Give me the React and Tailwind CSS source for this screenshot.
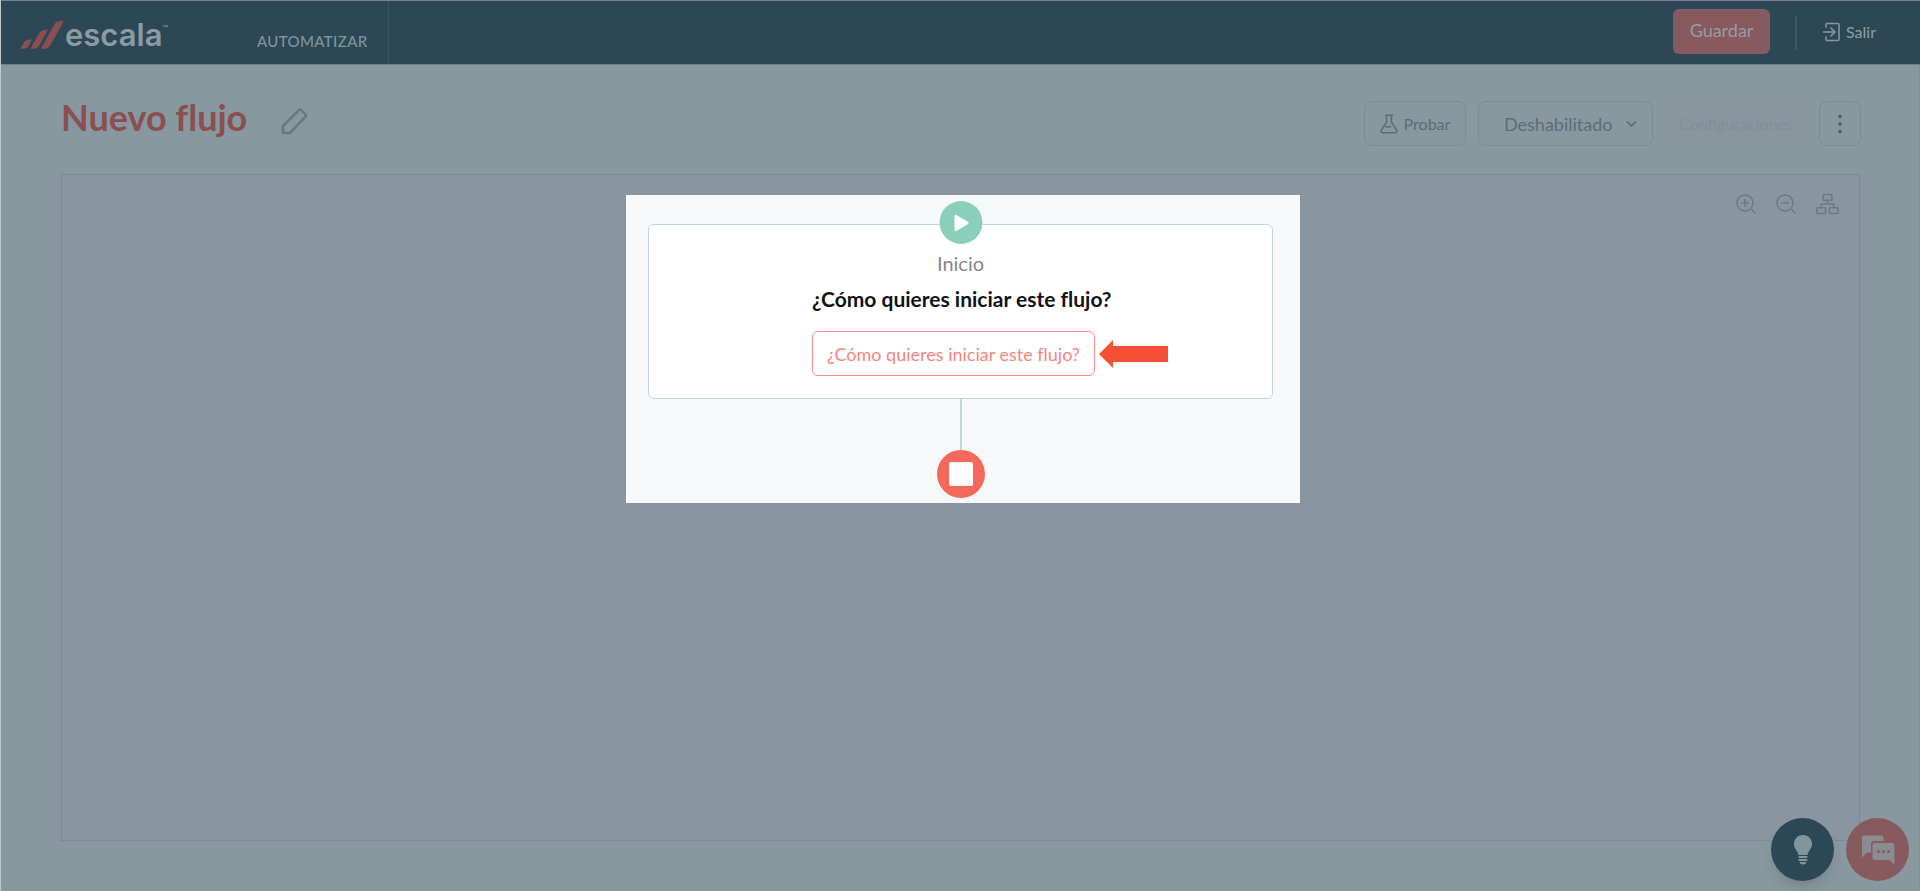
import { FaPlay } from "react-icons/fa";

function Logo() {
  return (
    <a href="#" className="flex items-center gap-px" aria-label="escala">
      <svg width="44" height="30" viewBox="0 0 44 30" fill="#8a4f50">
        <path d="M0.500 28.800 L4 22.500 Q6 19.300 12 19.600 L8.500 26 Q7 28.800 4 28.800 Z" />
        <path d="M10.500 28.800 L19 13.500 Q21.500 9.300 28 9.800 L19 25.800 Q17 28.800 14 28.800 Z" />
        <path d="M21 28.800 L34 5 Q37 0 43.800 1 L30 25.800 Q28 28.800 25 28.800 Z" />
      </svg>
      <span className="flex items-start font-[Inter,sans-serif] text-[#8a9ba2]">
        <span className="text-[31px] leading-8 font-semibold">escala</span>
        <span className="text-[9px] leading-5">™</span>
      </span>
    </a>
  );
}

function PencilIcon() {
  return (
    <svg width="28" height="28" viewBox="0 0 28 28" fill="none" stroke="#677981" strokeWidth="2.600" strokeLinejoin="round">
      <path d="M2 26 V19 L17.500 3.500 Q19 2 20.500 3.300 L24.500 7.300 Q25.500 8.500 24.500 9.600 L9 26 Z" />
    </svg>
  );
}

function ExitIcon() {
  return (
    <svg width="17" height="20" viewBox="0 0 17 20" fill="none" stroke="#8496a0" strokeWidth="1.600">
      <path d="M3 5.500 V2.500 Q3 1.500 4 1.500 H15 Q16 1.500 16 2.500 V17.500 Q16 18.500 15 18.500 H4 Q3 18.500 3 17.500 V14.500" />
      <path d="M0 10 H11.500 M7.500 5.500 L12 10 L7.500 14.500" />
    </svg>
  );
}

function FlaskIcon() {
  return (
    <svg width="18" height="20" viewBox="0 0 18 20" fill="none" stroke="#5a6d76" strokeWidth="1.500" strokeLinejoin="round">
      <path d="M5 1.200 H13 M6.500 1.200 V8 L1.300 16.300 Q0.500 18.800 3 18.800 H15 Q17.500 18.800 16.700 16.300 L11.500 8 V1.200" />
      <path d="M5 12.800 H11" />
    </svg>
  );
}

function ZoomIcon({ plus }) {
  return (
    <svg width="20" height="20" viewBox="0 0 20 20" fill="none" stroke="#687c85" strokeWidth="1.500">
      <circle cx="9" cy="9" r="8" />
      <path d="M15.500 15.500 L19.300 19.300 M5 9 H13" />
      {plus && <path d="M9 5 V13" />}
    </svg>
  );
}

function TreeIcon() {
  return (
    <svg width="23" height="22" viewBox="0 0 24 22" fill="none" stroke="#687c85" strokeWidth="1.600">
      <rect x="7.500" y="1" width="9" height="6" rx="0.500" />
      <rect x="1" y="15" width="9" height="6" rx="0.500" />
      <rect x="14" y="15" width="9" height="6" rx="0.500" />
      <path d="M12 7 V11 M5.500 15 V11 H18.500 V15" />
    </svg>
  );
}

function BulbIcon() {
  return (
    <svg width="20" height="32" viewBox="0 0 20 32" fill="#82959d">
      <path d="M10 1 C4.500 1 1 5 1 10 C1 15 5 17 5.500 21 H14.500 C15 17 19 15 19 10 C19 5 15.500 1 10 1 Z" />
      <rect x="5.500" y="22" width="9" height="2" rx="1" />
      <rect x="5.500" y="25" width="9" height="2" rx="1" />
      <path d="M6.500 28 H13.500 Q13 30.500 10 30.500 Q7 30.500 6.500 28 Z" />
    </svg>
  );
}

function ChatIcon() {
  return (
    <svg width="34" height="30" viewBox="0 0 34 30">
      <path fill="#8d8b92" d="M3 0.500 H20 Q22.500 0.500 22.500 3 V6 H13 Q10 6 10 9 V17.500 H6 L1 22.500 V3 Q1 0.500 3 0.500 Z" />
      <path fill="#8d8b92" d="M14 8 H31 Q33.500 8 33.500 10.500 V30 L28.500 25 H14 Q11.500 25 11.500 22.500 V10.500 Q11.500 8 14 8 Z" />
      <g fill="#865a5e">
        <circle cx="17.500" cy="16.500" r="1.500" />
        <circle cx="22.500" cy="16.500" r="1.500" />
        <circle cx="27.500" cy="16.500" r="1.500" />
      </g>
    </svg>
  );
}

function Header() {
  return (
    <header className="flex h-[65px] items-stretch justify-between border-t border-b border-t-[#7f7c9b] border-b-[#6c808a] bg-[#2c4857] pr-11">
      <div className="flex">
        <div className="flex items-center pt-1 pl-[19px]">
          <Logo />
        </div>
        <nav className="ml-[89px] flex items-center border-r border-[#3a5664] pt-[18px] pr-5">
          <a href="#" className="text-[15px] font-medium tracking-wide text-[#82939d]">AUTOMATIZAR</a>
        </nav>
      </div>
      <div className="flex items-start pt-2">
        <button type="button" className="h-[45px] w-[97px] rounded-md bg-[#865a5e] pb-1 text-lg text-[#9a9ba3]">Guardar</button>
        <span className="mt-[7px] ml-[25px] h-[34px] w-0.5 bg-[#3d5765]" />
        <a href="#" className="mt-[11px] ml-[26px] flex items-center gap-1.5 text-base text-[#8c9da6]">
          <ExitIcon />
          Salir
        </a>
      </div>
    </header>
  );
}

function Toolbar() {
  return (
    <div className="flex items-start justify-between pr-[58px] pl-[60px]">
      <div className="flex items-center gap-[34px] pt-[30px]">
        <h1 className="text-4xl leading-[44px] font-bold text-[#8a4f50]">Nuevo flujo</h1>
        <button type="button" aria-label="Editar nombre" className="pt-2">
          <PencilIcon />
        </button>
      </div>
      <div className="flex gap-3 pt-9">
        <button type="button" className="flex h-[45px] w-[102px] items-center justify-center gap-1.5 rounded-lg border border-[#7a8d96] text-base text-[#5c6e77]">
          <FlaskIcon />
          Probar
        </button>
        <div className="relative">
          <select aria-label="Estado del flujo" className="h-[45px] w-[175px] appearance-none rounded-lg border border-[#7a8d96] bg-transparent pl-[25px] text-lg text-[#5c6e77]">
            <option>Deshabilitado</option>
            <option>Habilitado</option>
          </select>
          <svg className="pointer-events-none absolute top-[19px] right-4" width="11" height="8" viewBox="0 0 11 8" fill="none" stroke="#566972" strokeWidth="1.500">
            <path d="M1 1.500 L5.500 6 L10 1.500" />
          </svg>
        </div>
        <button type="button" disabled className="h-[45px] w-[142px] rounded-lg bg-[#89969e] text-base text-[#7e919a]">Configuraciones</button>
        <button type="button" aria-label="Más opciones" className="flex h-[45px] w-[42px] items-center justify-center rounded-lg border border-[#7a8d96]">
          <svg width="4" height="20" viewBox="0 0 4 20" fill="#4b5d67">
            <circle cx="2" cy="2.500" r="1.800" />
            <circle cx="2" cy="10" r="1.800" />
            <circle cx="2" cy="17.500" r="1.800" />
          </svg>
        </button>
      </div>
    </div>
  );
}

function StartCard() {
  return (
    <section className="relative flex w-[625px] flex-col items-center rounded-md border border-[#c0d4de] bg-white pt-[26px] pb-[22px]">
      <span className="absolute -top-6 left-1/2 flex size-[43px] -translate-x-1/2 items-center justify-center rounded-full bg-[#8acfb9]">
        <FaPlay className="ml-0.5 size-4 text-white" />
      </span>
      <p className="text-xl leading-6 text-[#85868a]">Inicio</p>
      <div className="mt-2.5 flex w-[297px] flex-col items-start">
        <h2 className="text-[21px] leading-7 font-bold whitespace-nowrap text-[#111315]">¿Cómo quieres iniciar este flujo?</h2>
        <div className="relative mt-[18px]">
          <button type="button" className="h-[45px] rounded-md border border-[#f58d84] px-3.5 text-lg text-[#f5857c]">
            ¿Cómo quieres iniciar este flujo?
          </button>
          <svg className="absolute top-2 left-full ml-1" width="69" height="30" viewBox="0 0 69 30" fill="#f55036">
            <path d="M0 15 L14 1 V7 H69 V23 H14 V29 Z" />
          </svg>
        </div>
      </div>
    </section>
  );
}

function Canvas() {
  return (
    <div className="mt-7 mr-[44px] mb-[50px] ml-[45px] flex flex-1 bg-[#89969f] px-[15px]">
      <div className="relative flex flex-1 items-start justify-center border border-[#7a8d96] pt-5 pl-[5px]">
        <div className="flex flex-col items-center bg-[#f6f8fa] pt-[29px] pr-[27px] pb-[5px] pl-[22px]">
          <StartCard />
          <span className="h-[51px] w-0.5 bg-[#c5d5df]" />
          <span className="flex size-12 items-center justify-center rounded-full bg-[#f5695c]">
            <span className="size-6 rounded-xs bg-white" />
          </span>
        </div>
        <div className="absolute top-[18px] right-5 flex items-center gap-5">
          <button type="button" aria-label="Acercar"><ZoomIcon plus /></button>
          <button type="button" aria-label="Alejar"><ZoomIcon /></button>
          <button type="button" aria-label="Ordenar"><TreeIcon /></button>
        </div>
      </div>
    </div>
  );
}

export default function App() {
  return (
    <div className="relative flex min-h-screen flex-col border-l border-[#bfcacd] bg-[#88989f] font-[Lato,sans-serif] [font-variant-ligatures:none]">
      <Header />
      <main className="flex flex-1 flex-col border-r border-[#7f9097]">
        <Toolbar />
        <Canvas />
      </main>
      <div className="fixed right-[11px] bottom-[10px] flex gap-3">
        <button type="button" aria-label="Ideas" className="flex size-[63px] items-center justify-center rounded-full bg-[#2c4857] shadow-lg">
          <BulbIcon />
        </button>
        <button type="button" aria-label="Chat" className="flex size-[63px] items-center justify-center rounded-full bg-[#865a5e]">
          <ChatIcon />
        </button>
      </div>
    </div>
  );
}
